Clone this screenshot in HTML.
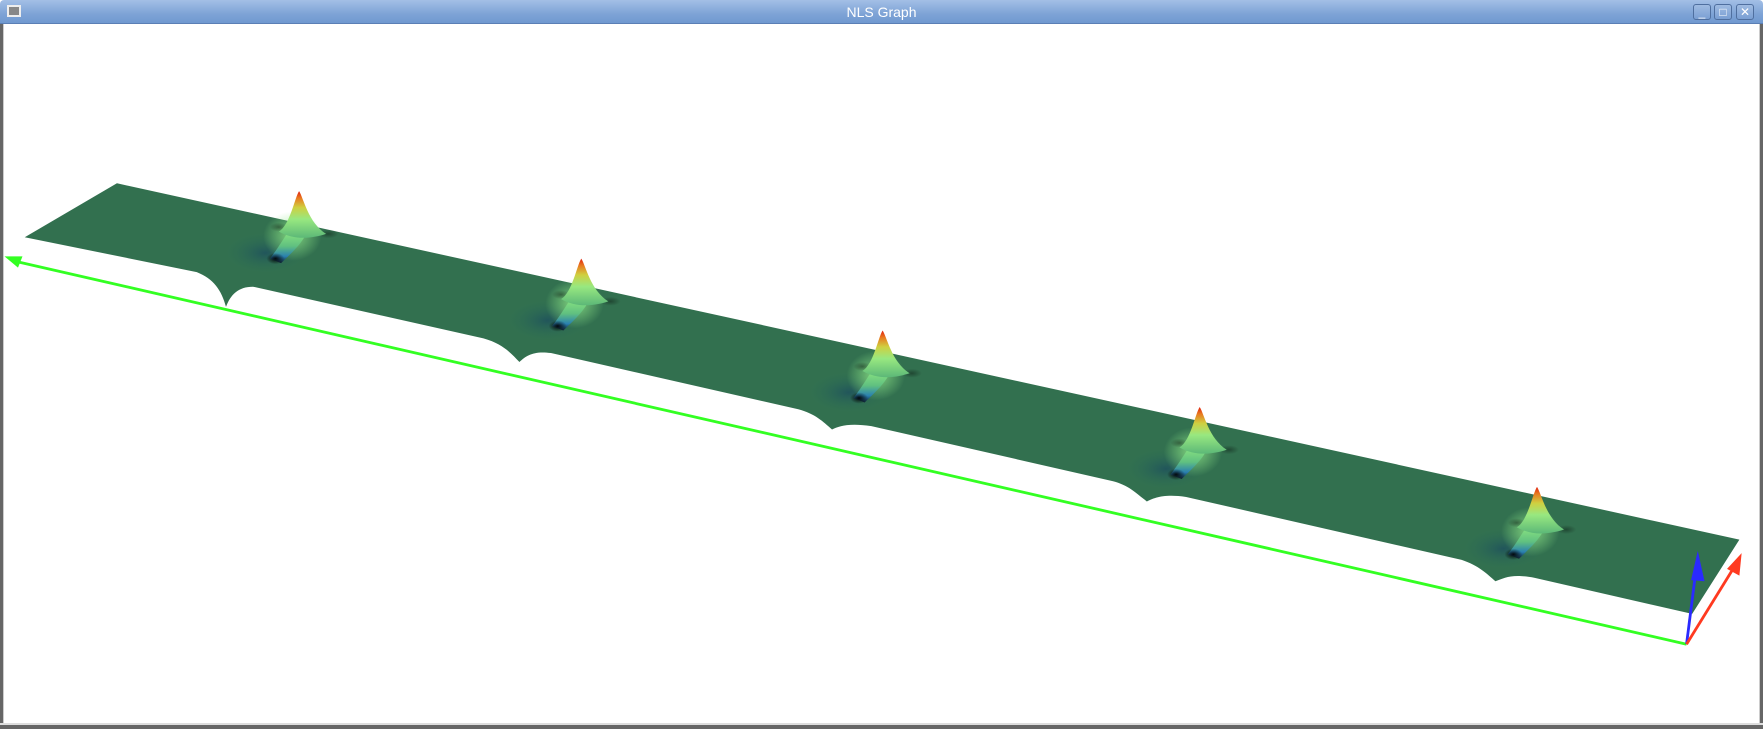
<!DOCTYPE html>
<html><head><meta charset="utf-8"><style>
html,body{margin:0;padding:0;width:1763px;height:729px;overflow:hidden;background:#fff;font-family:"Liberation Sans",sans-serif}
#tb{position:absolute;left:0;top:0;width:1763px;height:24px;background:linear-gradient(#a3bfe6,#7ea3d6 60%,#7099d0);border-bottom:1px solid #5b7fb5;box-sizing:border-box;border-radius:4px 4px 0 0}
#tb .t{position:absolute;left:0;right:0;top:4px;text-align:center;color:#fff;font-size:14px}
.ic{position:absolute;left:7px;top:5px;width:14px;height:12px;background:#888;border:2px solid #eee;box-sizing:border-box}
.b{position:absolute;top:4px;width:18px;height:16px;border:1px solid #4f6f9f;border-radius:3px;background:linear-gradient(#9fbbe2,#7a9fd3);box-sizing:border-box;color:#fff;font-size:12px;text-align:center;line-height:14px}
#fl{position:absolute;left:0;top:24px;width:3px;height:705px;background:#666;border-right:1px solid #ccc}
#fr{position:absolute;right:0;top:24px;width:3px;height:705px;background:#666;border-left:1px solid #ccc}
#fb{position:absolute;left:0;bottom:0;width:1763px;height:4px;background:#666;border-top:2px solid #ddd}
svg{position:absolute;left:0;top:0}
</style></head><body>
<svg width="1763" height="729" viewBox="0 0 1568 648.4" preserveAspectRatio="none">
<defs>
<linearGradient id="pk" x1="0" y1="0" x2="0" y2="1">
<stop offset="0" stop-color="#e02010"/><stop offset="0.15" stop-color="#e87a20"/><stop offset="0.35" stop-color="#cfd040"/><stop offset="0.6" stop-color="#98e880"/><stop offset="1" stop-color="#5cb878"/>
</linearGradient>
<linearGradient id="st" x1="0" y1="0" x2="0" y2="1">
<stop offset="0" stop-color="#90e880"/><stop offset="0.5" stop-color="#60c080"/><stop offset="0.8" stop-color="#2a80b0"/><stop offset="1" stop-color="#102030"/>
</linearGradient>
<radialGradient id="dk"><stop offset="0" stop-color="#000" stop-opacity=".9"/><stop offset="1" stop-color="#000" stop-opacity="0"/></radialGradient>
<radialGradient id="gl"><stop offset="0" stop-color="#90e888" stop-opacity=".85"/><stop offset="1" stop-color="#90e888" stop-opacity="0"/></radialGradient>
<radialGradient id="bl"><stop offset="0" stop-color="#1a4a60" stop-opacity=".7"/><stop offset="1" stop-color="#2a6e58" stop-opacity="0"/></radialGradient>
<g id="P">
<ellipse cx="-30" cy="55" rx="36" ry="18" fill="url(#bl)"/>
<ellipse cx="-6" cy="40" rx="26" ry="22" fill="url(#gl)"/>
<path d="M-26 60 C-18 50,-14 42,-8 34 L8 34 C4 46,-8 56,-16 64 Z" fill="url(#st)"/>
<ellipse cx="-21" cy="60" rx="8" ry="5" fill="url(#dk)"/>
<ellipse cx="-18" cy="32" rx="8" ry="4" fill="url(#dk)" opacity=".4"/>
<ellipse cx="26" cy="38" rx="9" ry="4" fill="url(#dk)" opacity=".4"/>
<path d="M-18 36 C-8 30,-4 6,0 0 C4 6,8 28,24 38 C12 42,-4 44,-18 36 Z" fill="url(#pk)"/>
</g>
</defs>
<path d="M104 163 L1547 480 L1505 546 L1365 514 C1345 510,1338 514,1330 517 C1322 510,1315 503,1300 498 L1055 442 C1035 439,1026 443,1020 446 C1012 440,1005 432,990 428 L775 379 C755 376,746 379,740 382 C732 375,725 368,710 364 L490 314 C475 312,468 316,462 322 C455 315,448 306,430 301 L225 255 C212 255,205 262,201 273 C197 258,190 248,175 242 L22 211 Z" fill="#32704f"/>
<use href="#P" x="266" y="170"/>
<use href="#P" x="517" y="230"/>
<use href="#P" x="785" y="294"/>
<use href="#P" x="1067" y="362"/>
<use href="#P" x="1367" y="433"/>
<line x1="12" y1="232" x2="1500" y2="573" stroke="#33ff22" stroke-width="2.5"/>
<path d="M4 228 L20 228 L16 238 Z" fill="#33ff22"/>
<line x1="1500" y1="573" x2="1508" y2="510" stroke="#2a2aff" stroke-width="2.5"/>
<path d="M1510 490 L1516 517 L1504 516 Z" fill="#2a2aff"/>
<line x1="1500" y1="573" x2="1542" y2="505" stroke="#ff3a20" stroke-width="2.5"/>
<path d="M1549 492 L1547 512 L1536 506 Z" fill="#ff3a20"/>
</svg>
<div id="tb"><div class="ic"></div><div class="t">NLS Graph</div>
<div class="b" style="left:1693px">_</div><div class="b" style="left:1714px">□</div><div class="b" style="left:1736px">✕</div></div>
<div id="fl"></div><div id="fr"></div><div id="fb"></div>
</body></html>
